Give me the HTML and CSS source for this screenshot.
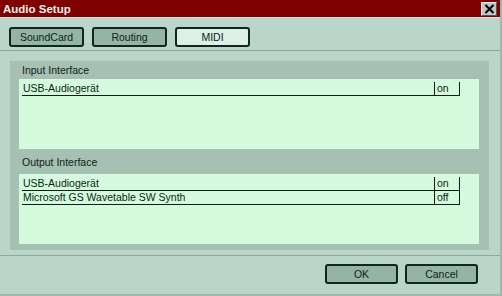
FILE: index.html
```html
<!DOCTYPE html>
<html lang="de">
<head>
    <meta charset="UTF-8">
    <title>Audio Setup</title>
    <link rel="stylesheet" href="styles.css">
</head>
<body>
    <div class="window">
        <div class="titlebar">
            <span class="title">Audio Setup</span>
            <button class="close-btn">
                <svg width="11" height="10" viewBox="0 0 11 10">
                    <path d="M1.5 1 L9.5 9 M9.5 1 L1.5 9" stroke="#000" stroke-width="2"/>
                </svg>
            </button>
        </div>

        <div class="tabs">
            <button class="tab">SoundCard</button>
            <button class="tab">Routing</button>
            <button class="tab active">MIDI</button>
        </div>
        <div class="divider"></div>

        <div class="panel">
            <div class="section-label">Input Interface</div>
            <div class="device-list">
                <div class="device-row">
                    <span class="device-name">USB-Audiogerät</span>
                    <span class="device-state">on</span>
                </div>
            </div>

            <div class="section-label second">Output Interface</div>
            <div class="device-list">
                <div class="device-row">
                    <span class="device-name">USB-Audiogerät</span>
                    <span class="device-state">on</span>
                </div>
                <div class="device-row">
                    <span class="device-name">Microsoft GS Wavetable SW Synth</span>
                    <span class="device-state">off</span>
                </div>
            </div>
        </div>

        <div class="divider footer-divider"></div>
        <div class="footer">
            <button class="btn">OK</button>
            <button class="btn">Cancel</button>
        </div>
    </div>
</body>
</html>
```

FILE: styles.css
```css
body {
    margin: 0;
    background: #bad6ca;
    font-family: 'Liberation Sans', Arial, sans-serif;
    font-size: 10.5px;
    color: #0c1f14;
}
.window {
    width: 502px;
    height: 296px;
    box-sizing: border-box;
    background: #bad6ca;
    border-right: 2px solid #9fb8ad;
    border-bottom: 2px solid #9fb8ad;
}
.titlebar {
    height: 18px;
    background: #7e0000;
    border-bottom: 1px solid #d9e6df;
    box-sizing: border-box;
    display: flex;
    justify-content: space-between;
    align-items: center;
    padding: 0 3px 0 3px;
}
.title {
    color: #f4f0f0;
    font-weight: 700;
    font-size: 11.5px;
}
.close-btn {
    width: 16px;
    height: 14px;
    padding: 0;
    margin-top: 1px;
    background: #c4c4c4;
    border: 1px solid;
    border-color: #eee #555 #555 #eee;
    display: flex;
    align-items: center;
    justify-content: center;
}
.tabs {
    display: flex;
    gap: 8px;
    padding: 9px 0 0 9px;
}
.tab, .btn {
    width: 75px;
    height: 20px;
    box-sizing: border-box;
    background: #94b4a6;
    border: 2px solid #12261c;
    border-radius: 3px;
    font-family: 'Liberation Sans', Arial, sans-serif;
    font-size: 10.5px;
    color: #0c1f14;
    padding: 0;
}
.tab.active {
    background: #dcf0e6;
}
.divider {
    height: 1px;
    background: #8fa99d;
    margin-top: 3px;
}
.panel {
    margin: 10px 0 0 10px;
    width: 479px;
    height: 189px;
    box-sizing: border-box;
    background: #a7c0b4;
    padding: 0 10px 0 9px;
}
.section-label {
    height: 18px;
    line-height: 18px;
    padding-left: 3px;
}
.section-label.second {
    margin: 4px 0 3px;
}
.device-list {
    height: 70px;
    box-sizing: border-box;
    background: #d5fadd;
    padding: 3px 19px 0 3px;
}
.device-row {
    display: flex;
    height: 14px;
    line-height: 13px;
}
.device-name {
    flex: 1;
    padding-left: 1px;
    border-bottom: 1px solid #0c1f14;
}
.device-state {
    width: 26px;
    box-sizing: border-box;
    padding-left: 2px;
    border: 1px solid #0c1f14;
    border-top: none;
}
.footer-divider {
    margin-top: 5px;
}
.footer {
    display: flex;
    justify-content: flex-end;
    gap: 7px;
    padding: 8px 22px 0 0;
}
.btn {
    width: 73px;
}
```
